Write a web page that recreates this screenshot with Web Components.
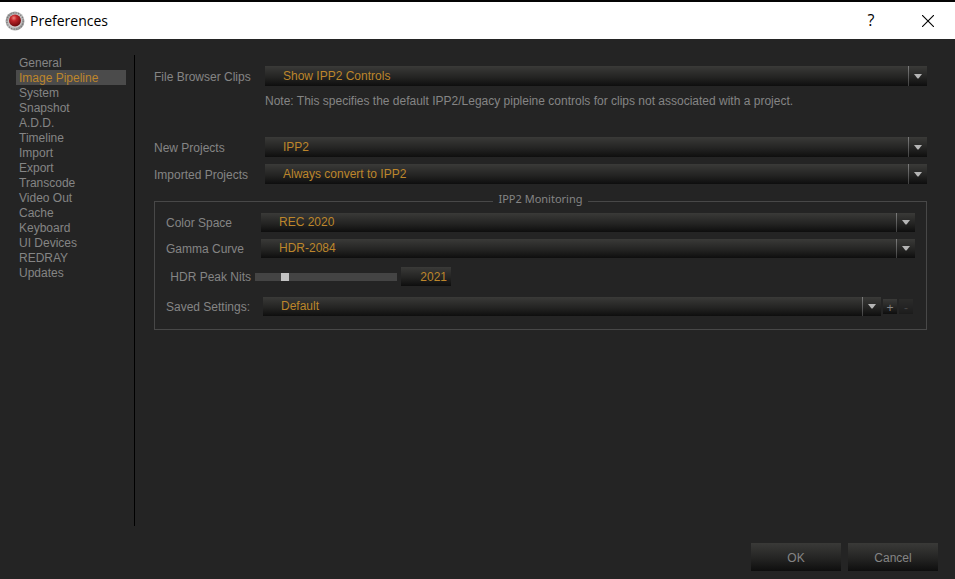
<!DOCTYPE html>
<html lang="en">
    <head>
        <meta charset="UTF-8" />
        <meta name="viewport" content="width=device-width, initial-scale=1.0" />
        <title>Preferences</title>
        <style>
            body {
                margin: 0;
                background: #242424;
                color: #858585;
                font: 12px/15px 'Liberation Sans', Arial, sans-serif;
                --accent: #bd862b;
                --bevel: linear-gradient(#3a3a38, #242423 55%, #0e0e0e);
            }
        </style>
    </head>
    <body>
        <pref-window>
            <title-bar slot="title">Preferences</title-bar>
            <nav-item slot="nav" href="#general">General</nav-item>
            <nav-item slot="nav" href="#pipeline" current>Image Pipeline</nav-item>
            <nav-item slot="nav" href="#system">System</nav-item>
            <nav-item slot="nav" href="#snapshot">Snapshot</nav-item>
            <nav-item slot="nav" href="#add">A.D.D.</nav-item>
            <nav-item slot="nav" href="#timeline">Timeline</nav-item>
            <nav-item slot="nav" href="#import">Import</nav-item>
            <nav-item slot="nav" href="#export">Export</nav-item>
            <nav-item slot="nav" href="#transcode">Transcode</nav-item>
            <nav-item slot="nav" href="#video">Video Out</nav-item>
            <nav-item slot="nav" href="#cache">Cache</nav-item>
            <nav-item slot="nav" href="#keyboard">Keyboard</nav-item>
            <nav-item slot="nav" href="#devices">UI Devices</nav-item>
            <nav-item slot="nav" href="#redray">REDRAY</nav-item>
            <nav-item slot="nav" href="#updates">Updates</nav-item>

            <pipeline-page></pipeline-page>

            <push-button slot="actions">OK</push-button>
            <push-button slot="actions">Cancel</push-button>
        </pref-window>

        <script>
            class PrefWindow extends HTMLElement {
                constructor() {
                    super()
                    const shadow = this.attachShadow({ mode: 'open' })
                    shadow.innerHTML = `
                    <style>
                        :host {
                            display: flex;
                            flex-direction: column;
                            min-height: 100vh;
                            box-sizing: border-box;
                            border-top: 2px solid #040404;
                        }
                        .body {
                            flex: 1;
                            display: flex;
                            padding: 16px 28px 0 16px;
                        }
                        nav {
                            flex: 0 0 110px;
                            padding-right: 8px;
                            border-right: 1px solid #000;
                        }
                        main {
                            flex: 1;
                            min-width: 0;
                            padding: 11px 0 0 19px;
                        }
                        footer {
                            display: flex;
                            justify-content: flex-end;
                            gap: 7px;
                            padding: 17px 17px 8px;
                        }
                    </style>
                    <slot name="title"></slot>
                    <div class="body">
                        <nav><slot name="nav"></slot></nav>
                        <main><slot></slot></main>
                    </div>
                    <footer><slot name="actions"></slot></footer>
                `
                }
            }

            class TitleBar extends HTMLElement {
                constructor() {
                    super()
                    const shadow = this.attachShadow({ mode: 'open' })
                    shadow.innerHTML = `
                    <style>
                        :host {
                            display: flex;
                            align-items: center;
                            gap: 3px;
                            height: 37px;
                            padding-left: 5px;
                            background: #fff;
                            color: #000;
                            font-family: 'Open Sans', 'Noto Sans', sans-serif;
                            font-size: 14px;
                        }
                        h1 {
                            flex: 1;
                            margin: 0 0 0 2px;
                            font: inherit;
                        }
                        button {
                            display: grid;
                            place-items: center;
                            width: 54px;
                            height: 37px;
                            padding: 0;
                            border: 0;
                            background: none;
                            color: inherit;
                            font: inherit;
                            font-size: 16px;
                        }
                        svg {
                            display: block;
                        }
                    </style>
                    <svg width="20" height="20" viewBox="0 0 20 20" aria-hidden="true">
                        <defs>
                            <radialGradient id="ball" cx="0.4" cy="0.3" r="0.7">
                                <stop offset="0" stop-color="#f08a80" />
                                <stop offset="0.35" stop-color="#c1252a" />
                                <stop offset="1" stop-color="#6c0a0e" />
                            </radialGradient>
                            <linearGradient id="rim" x1="0" y1="0" x2="1" y2="1">
                                <stop offset="0" stop-color="#888" />
                                <stop offset="0.5" stop-color="#c4c4c4" />
                                <stop offset="1" stop-color="#888" />
                            </linearGradient>
                        </defs>
                        <circle cx="10" cy="10" r="9.5" fill="url(#rim)" />
                        <circle cx="10" cy="10" r="8.2" fill="none" stroke="#777" stroke-width="1.2" stroke-dasharray="1.2 1.4" />
                        <circle cx="10" cy="10" r="6.8" fill="#d0cccc" />
                        <circle cx="10" cy="9.4" r="6" fill="url(#ball)" />
                    </svg>
                    <h1><slot></slot></h1>
                    <button type="button">?</button>
                    <button type="button" aria-label="Close">
                        <svg width="12" height="12" viewBox="0 0 12 12">
                            <path d="M0 0L12 12M12 0L0 12" stroke="#000" stroke-width="1.1" />
                        </svg>
                    </button>
                `
                }
            }

            class NavItem extends HTMLElement {
                constructor() {
                    super()
                    const shadow = this.attachShadow({ mode: 'open' })
                    shadow.innerHTML = `
                    <style>
                        :host {
                            display: block;
                        }
                        a {
                            display: block;
                            padding: 2px 0 0 3px;
                            line-height: 13px;
                            color: inherit;
                            text-decoration: none;
                        }
                        :host([current]) a {
                            background: #4b4b4b;
                            color: var(--accent);
                        }
                    </style>
                    <a href="${this.getAttribute('href')}"><slot></slot></a>
                `
                }
            }

            class PushButton extends HTMLElement {
                constructor() {
                    super()
                    const shadow = this.attachShadow({ mode: 'open' })
                    shadow.innerHTML = `
                    <style>
                        :host {
                            display: block;
                        }
                        button {
                            display: block;
                            width: 90px;
                            height: 28px;
                            padding: 2px 0 0;
                            border: 0;
                            background: var(--bevel);
                            color: inherit;
                            font: inherit;
                        }
                        :host([small]) button {
                            width: 14px;
                            height: 15px;
                        }
                        :host([disabled]) button {
                            opacity: 0.35;
                        }
                    </style>
                    <button type="button" ${this.hasAttribute('disabled') ? 'disabled' : ''}><slot></slot></button>
                `
                }
            }

            // label + drop-down, anything slotted in goes after the drop-down
            class SelectRow extends HTMLElement {
                constructor() {
                    super()
                    const shadow = this.attachShadow({ mode: 'open' })
                    shadow.innerHTML = `
                    <style>
                        :host {
                            display: flex;
                            align-items: center;
                            gap: 2px;
                        }
                        label {
                            flex: 0 0 var(--label-width, 109px);
                            padding-top: 2px;
                        }
                        .box {
                            flex: 1;
                            min-width: 0;
                            display: grid;
                            grid-template-columns: 1fr 19px;
                            height: var(--row-height, 20px);
                            background: var(--bevel);
                        }
                        select {
                            grid-area: 1 / 1 / 2 / 3;
                            appearance: none;
                            min-width: 0;
                            padding: 0 22px 0 18px;
                            border: 0;
                            background: none;
                            color: var(--accent);
                            font: inherit;
                        }
                        .arrow {
                            grid-area: 1 / 2;
                            display: grid;
                            place-items: center;
                            border-left: 1px solid;
                            border-image: linear-gradient(#808080, #3c3c3c) 1;
                            pointer-events: none;
                        }
                        svg {
                            display: block;
                        }
                    </style>
                    <label for="field">${this.getAttribute('label')}</label>
                    <div class="box">
                        <select id="field">
                            <option>${this.getAttribute('value')}</option>
                        </select>
                        <span class="arrow">
                            <svg width="8" height="7" viewBox="0 0 8 7">
                                <path d="M0 1H8L4.5 5.5H3.5Z" fill="#b5b5b5" />
                            </svg>
                        </span>
                    </div>
                    <slot></slot>
                `
                }
            }

            class SliderRow extends HTMLElement {
                constructor() {
                    super()
                    const shadow = this.attachShadow({ mode: 'open' })
                    const value = this.getAttribute('value')
                    shadow.innerHTML = `
                    <style>
                        :host {
                            display: flex;
                            align-items: center;
                            gap: 4px;
                        }
                        label {
                            flex: 0 0 85px;
                            padding-top: 1px;
                            text-align: right;
                        }
                        input {
                            margin: 0;
                            border: 0;
                            box-sizing: border-box;
                        }
                        input[type='range'] {
                            appearance: none;
                            width: 142px;
                            height: 8px;
                            background: #444;
                        }
                        input[type='range']::-webkit-slider-thumb {
                            appearance: none;
                            width: 8px;
                            height: 8px;
                            background: #c2c2c2;
                        }
                        input[type='text'] {
                            width: 50px;
                            height: 19px;
                            padding: 0 4px;
                            background: var(--bevel);
                            color: var(--accent);
                            font: inherit;
                            text-align: right;
                        }
                    </style>
                    <label for="range">${this.getAttribute('label')}</label>
                    <input id="range" type="range" min="100" max="10000" value="${value}">
                    <input type="text" value="${value}" aria-label="${this.getAttribute('label')}">
                `
                }
            }

            class PrefGroup extends HTMLElement {
                constructor() {
                    super()
                    const shadow = this.attachShadow({ mode: 'open' })
                    shadow.innerHTML = `
                    <style>
                        :host {
                            display: block;
                        }
                        fieldset {
                            margin: 0;
                            padding: 2px 11px 13px;
                            border: 1px solid #484848;
                            min-width: 0;
                        }
                        legend {
                            margin: 0 auto;
                            padding: 0 5px 5px;
                            font-family: 'Noto Sans', sans-serif;
                            font-size: 11px;
                        }
                    </style>
                    <fieldset>
                        <legend>${this.getAttribute('label')}</legend>
                        <slot></slot>
                    </fieldset>
                `
                }
            }

            class PipelinePage extends HTMLElement {
                constructor() {
                    super()
                    const shadow = this.attachShadow({ mode: 'open' })
                    shadow.innerHTML = `
                    <style>
                        :host {
                            display: block;
                        }
                        p {
                            margin: 8px 0 28px 111px;
                        }
                        .imported {
                            margin: 7px 0;
                        }
                        pref-group {
                            --label-width: 93px;
                            --row-height: 19px;
                        }
                        .gamma {
                            margin: 7px 0 9px;
                        }
                        .saved {
                            --label-width: 95px;
                            margin: 11px 2px 0 0;
                        }
                    </style>
                    <select-row label="File Browser Clips" value="Show IPP2 Controls"></select-row>
                    <p>Note: This specifies the default IPP2/Legacy pipleine controls for clips not associated with a project.</p>
                    <select-row label="New Projects" value="IPP2"></select-row>
                    <select-row class="imported" label="Imported Projects" value="Always convert to IPP2"></select-row>
                    <pref-group label="IPP2 Monitoring">
                        <select-row label="Color Space" value="REC 2020"></select-row>
                        <select-row class="gamma" label="Gamma Curve" value="HDR-2084"></select-row>
                        <slider-row label="HDR Peak Nits" value="2021"></slider-row>
                        <select-row class="saved" label="Saved Settings:" value="Default">
                            <push-button small>+</push-button>
                            <push-button small disabled>-</push-button>
                        </select-row>
                    </pref-group>
                `
                }
            }

            customElements.define('pref-window', PrefWindow)
            customElements.define('title-bar', TitleBar)
            customElements.define('nav-item', NavItem)
            customElements.define('push-button', PushButton)
            customElements.define('select-row', SelectRow)
            customElements.define('slider-row', SliderRow)
            customElements.define('pref-group', PrefGroup)
            customElements.define('pipeline-page', PipelinePage)
        </script>
    </body>
</html>
